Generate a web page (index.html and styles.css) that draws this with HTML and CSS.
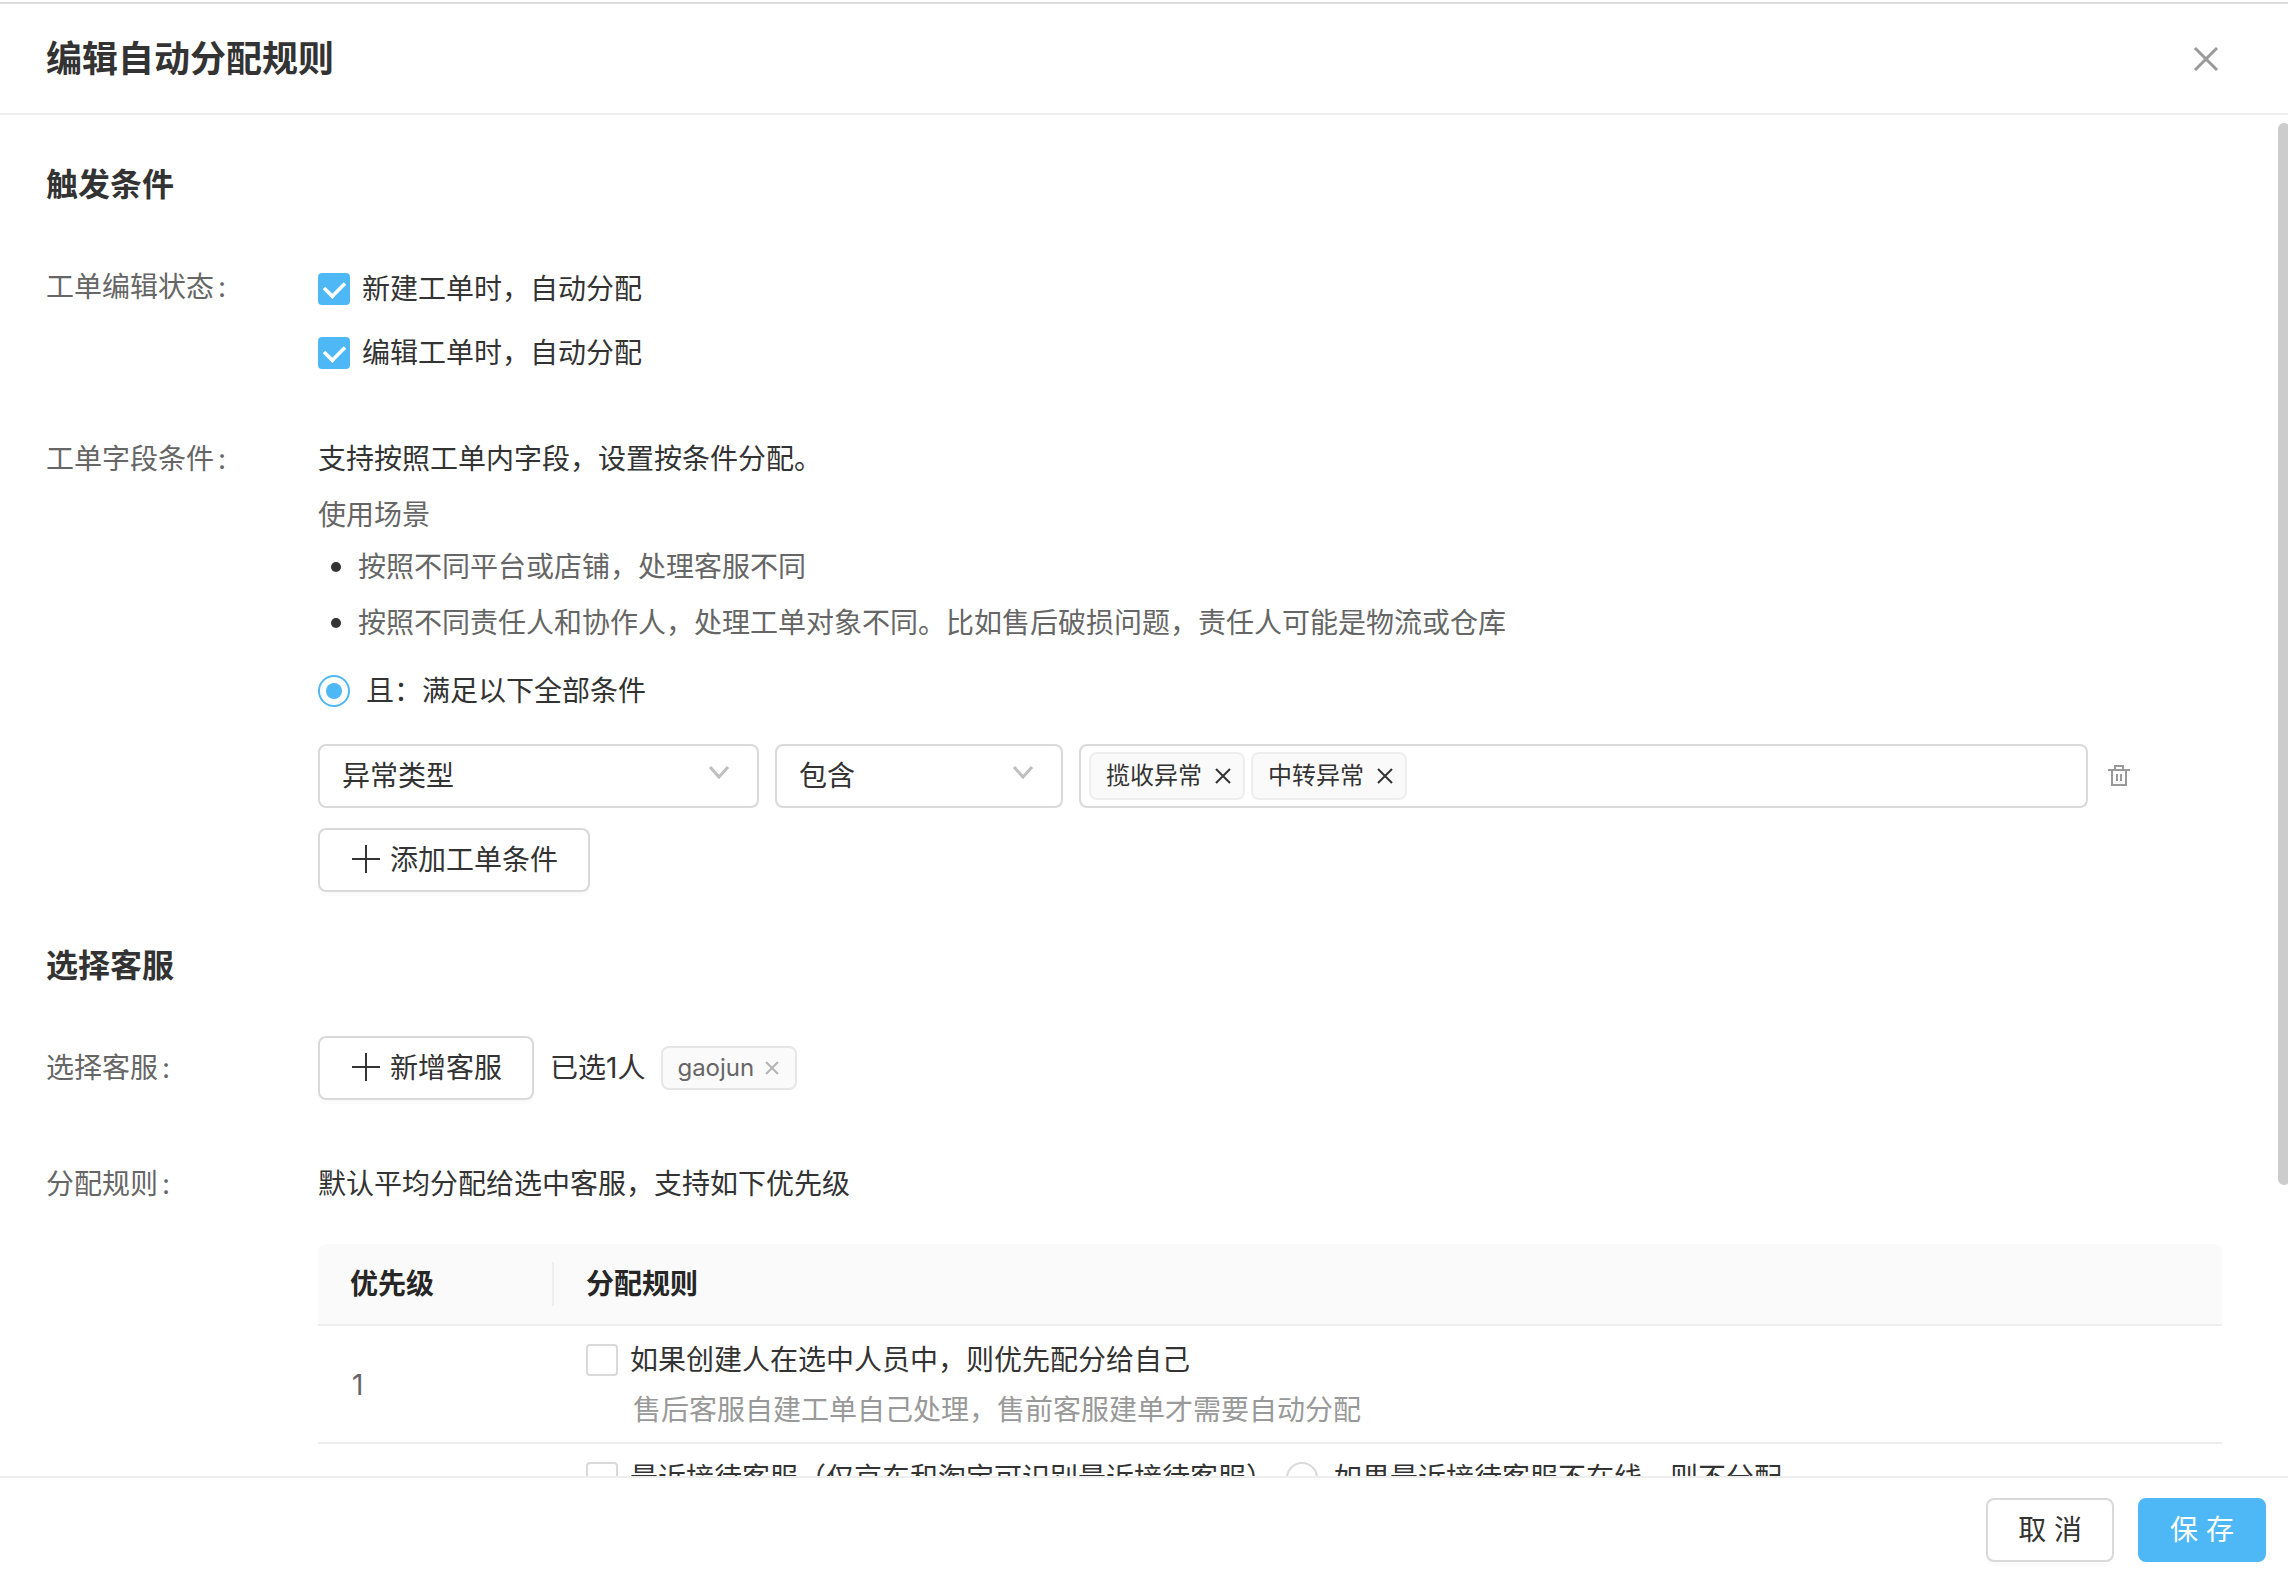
FILE: index.html
```html
<!DOCTYPE html>
<html lang="zh-CN">
<head>
<meta charset="utf-8">
<meta name="viewport" content="width=device-width, initial-scale=1">
<title>编辑自动分配规则</title>
<link rel="stylesheet" href="styles.css">
</head>
<body>
<form class="drawer">
  <header class="drawer-header">
    <h1 class="drawer-title">编辑自动分配规则</h1>
    <button type="button" class="icon-button" aria-label="关闭">
      <svg class="icon-close" viewBox="0 0 26 26" width="26" height="26"><path d="M2 2L24 24M24 2L2 24"/></svg>
    </button>
  </header>

  <main class="drawer-body">
    <section class="section">
      <h2 class="section-title">触发条件</h2>
      <div class="form-row">
        <div class="form-label form-label-offset">工单编辑状态<span class="colon">:</span></div>
        <div class="form-content check-list">
          <label class="choice"><input type="checkbox" class="checkbox" checked>新建工单时，自动分配</label>
          <label class="choice"><input type="checkbox" class="checkbox" checked>编辑工单时，自动分配</label>
        </div>
      </div>
      <div class="form-row">
        <div class="form-label">工单字段条件<span class="colon">:</span></div>
        <div class="form-content">
          <p class="text">支持按照工单内字段，设置按条件分配。</p>
          <p class="text hint">使用场景</p>
          <ul class="scenes">
            <li class="scene">按照不同平台或店铺，处理客服不同</li>
            <li class="scene">按照不同责任人和协作人，处理工单对象不同。比如售后破损问题，责任人可能是物流或仓库</li>
          </ul>
          <label class="choice choice-radio match-all"><input type="radio" name="match" class="radio" checked>且：满足以下全部条件</label>
          <div class="condition">
            <div class="select-wrap select-field">
              <select class="select" aria-label="字段"><option>异常类型</option></select>
              <svg class="chevron" viewBox="0 0 22 14" width="22" height="14"><path d="M2 2L11 12L20 2"/></svg>
            </div>
            <div class="select-wrap select-operator">
              <select class="select" aria-label="条件"><option>包含</option></select>
              <svg class="chevron" viewBox="0 0 22 14" width="22" height="14"><path d="M2 2L11 12L20 2"/></svg>
            </div>
            <div class="tag-box">
              <span class="tag">揽收异常<button type="button" class="icon-button" aria-label="移除揽收异常"><svg class="icon-remove" viewBox="0 0 18 18" width="18" height="18"><path d="M2 2L16 16M16 2L2 16"/></svg></button></span>
              <span class="tag">中转异常<button type="button" class="icon-button" aria-label="移除中转异常"><svg class="icon-remove" viewBox="0 0 18 18" width="18" height="18"><path d="M2 2L16 16M16 2L2 16"/></svg></button></span>
            </div>
            <button type="button" class="icon-button" aria-label="删除条件">
              <svg class="icon-trash" viewBox="0 0 22 24" width="22" height="24"><path d="M0 6H22M7 6V2H15V6M4 6V21H18V6M9 10V17M13 10V17"/></svg>
            </button>
          </div>
          <button type="button" class="button button-add"><svg class="icon-plus" viewBox="0 0 28 28" width="28" height="28"><path d="M14 0V28M0 14H28"/></svg>添加工单条件</button>
        </div>
      </div>
    </section>

    <section class="section">
      <h2 class="section-title">选择客服</h2>
      <div class="form-row">
        <div class="form-label form-label-tall">选择客服<span class="colon">:</span></div>
        <div class="form-content agents">
          <button type="button" class="button button-add"><svg class="icon-plus" viewBox="0 0 28 28" width="28" height="28"><path d="M14 0V28M0 14H28"/></svg>新增客服</button>
          <span>已选1人</span>
          <span class="agent-tag">gaojun<button type="button" class="icon-button" aria-label="移除gaojun"><svg class="icon-remove-light" viewBox="0 0 14 14" width="14" height="14"><path d="M1 1L13 13M13 1L1 13"/></svg></button></span>
        </div>
      </div>
      <div class="form-row">
        <div class="form-label">分配规则<span class="colon">:</span></div>
        <div class="form-content">
          <p class="text">默认平均分配给选中客服，支持如下优先级</p>
          <table class="rules">
            <thead>
              <tr><th class="col-priority"><div class="th-divided">优先级</div></th><th>分配规则</th></tr>
            </thead>
            <tbody>
              <tr>
                <td class="priority">1</td>
                <td>
                  <label class="choice"><input type="checkbox" class="checkbox">如果创建人在选中人员中，则优先配分给自己</label>
                  <p class="rule-note">售后客服自建工单自己处理，售前客服建单才需要自动分配</p>
                </td>
              </tr>
              <tr>
                <td class="priority"></td>
                <td>
                  <div class="rule-options">
                    <label class="choice"><input type="checkbox" class="checkbox">最近接待客服（仅京东和淘宝可识别最近接待客服）</label>
                    <label class="choice choice-radio"><input type="radio" name="offline" class="radio">如果最近接待客服不在线，则不分配</label>
                  </div>
                </td>
              </tr>
            </tbody>
          </table>
        </div>
      </div>
    </section>
    <div class="scroll-thumb"></div>
  </main>

  <footer class="drawer-footer">
    <button type="button" class="button">取 消</button>
    <button type="submit" class="button button-primary">保 存</button>
  </footer>
</form>
</body>
</html>
```
FILE: styles.css
```css
* {
  box-sizing: border-box;
}

body {
  margin: 0;
  background: #fff;
  color: #333;
  font-family: Inter, "Noto Sans CJK SC", sans-serif;
  font-size: 28px;
  line-height: 44px;
}

h1, h2, p, ul {
  margin: 0;
  padding: 0;
}

button, select, input {
  margin: 0;
  font: inherit;
  color: inherit;
}

svg {
  display: block;
  fill: none;
  stroke: currentColor;
}

.drawer {
  display: flex;
  flex-direction: column;
  height: 100vh;
  padding-top: 2px;
}

.drawer-header {
  display: flex;
  align-items: center;
  justify-content: space-between;
  padding: 29px 69px 28px 46px;
  border-top: 2px solid #dcdcdc;
  border-bottom: 2px solid #eee;
}

.drawer-title {
  font-size: 36px;
  line-height: 52px;
  font-weight: 600;
}

.drawer-body {
  position: relative;
  flex: 1;
  min-height: 0;
  overflow: hidden;
  padding: 46px 66px 0 46px;
}

.drawer-footer {
  display: flex;
  justify-content: flex-end;
  gap: 24px;
  padding: 20px 22px 16px;
  border-top: 2px solid #eee;
}

.scroll-thumb {
  position: absolute;
  top: 8px;
  right: -2px;
  width: 12px;
  height: 78%;
  border-radius: 6px;
  background: #ccc;
}

.section {
  margin-bottom: 50px;
}

.section-title {
  margin-bottom: 46px;
  font-size: 32px;
  line-height: 48px;
  font-weight: 600;
}

.form-row {
  display: grid;
  grid-template-columns: 272px 1fr;
}

.form-row + .form-row {
  margin-top: 62px;
}

.form-label {
  color: #666;
}

.form-label-offset {
  padding-top: 10px;
}

.form-label-tall {
  line-height: 64px;
}

.colon {
  margin-left: 4px;
}

.check-list {
  display: flex;
  flex-direction: column;
  gap: 20px;
  padding-top: 12px;
}

.choice {
  display: flex;
  align-items: center;
  gap: 12px;
}

.choice-radio {
  gap: 16px;
}

.checkbox, .radio {
  display: grid;
  place-items: center;
  flex: none;
  appearance: none;
  width: 32px;
  height: 32px;
  border: 2px solid #d9d9d9;
  border-radius: 4px;
  background: #fff;
}

.checkbox:checked {
  border-color: #4eb8f6;
  background: #4eb8f6;
}

.checkbox:checked::before {
  content: "";
  width: 11px;
  height: 18px;
  margin-bottom: 4px;
  border: solid #fff;
  border-width: 0 4px 4px 0;
  transform: rotate(45deg) scale(0.9);
}

.radio {
  border-radius: 50%;
}

.radio:checked {
  border-color: #4eb8f6;
}

.radio:checked::before {
  content: "";
  width: 16px;
  height: 16px;
  border-radius: 50%;
  background: #4eb8f6;
}

.hint {
  margin-top: 12px;
  color: #666;
}

.scenes {
  display: grid;
  gap: 12px;
  margin-top: 8px;
  list-style: none;
}

.scene {
  display: flex;
  align-items: center;
  gap: 17px;
  padding-left: 13px;
  color: #666;
}

.scene::before {
  content: "";
  width: 10px;
  height: 10px;
  border-radius: 50%;
  background: #333;
}

.match-all {
  margin-top: 24px;
}

.condition {
  display: flex;
  align-items: center;
  gap: 16px;
  margin: 31px 92px 20px 0;
}

.select-wrap {
  display: grid;
  align-items: center;
}

.select-field {
  width: 441px;
}

.select-operator {
  width: 288px;
}

.select {
  grid-area: 1 / 1;
  appearance: none;
  width: 100%;
  height: 64px;
  padding: 0 22px;
  border: 2px solid #d9d9d9;
  border-radius: 8px;
  background: #fff;
}

.chevron {
  grid-area: 1 / 1;
  justify-self: end;
  margin: 0 29px 8px 0;
  color: #bfbfbf;
  stroke-width: 3;
  pointer-events: none;
}

.tag-box {
  display: flex;
  flex: 1;
  align-items: center;
  gap: 6px;
  height: 64px;
  margin-right: 4px;
  padding: 0 8px;
  border: 2px solid #d9d9d9;
  border-radius: 8px;
}

.tag, .agent-tag {
  display: flex;
  align-items: center;
  gap: 12px;
  border: 2px solid #eee;
  border-radius: 8px;
  background: #fafafa;
  font-size: 24px;
}

.tag {
  height: 48px;
  padding: 0 11px 0 15px;
}

.agent-tag {
  height: 44px;
  gap: 11px;
  padding: 0 16px 0 14px;
  border-color: #e6e6e6;
  color: #666;
}

.icon-button {
  padding: 0;
  border: 0;
  background: none;
}

.icon-close {
  color: #999;
  stroke-width: 3;
}

.icon-remove {
  stroke-width: 2;
}

.icon-remove-light {
  color: #b3b3b3;
  stroke-width: 2;
}

.icon-trash {
  color: #999;
  stroke-width: 2;
}

.icon-plus {
  margin-bottom: 2px;
  stroke-width: 2;
}

.button {
  height: 64px;
  padding: 0 30px;
  border: 2px solid #d9d9d9;
  border-radius: 8px;
  background: #fff;
  box-shadow: 0 4px 0 rgba(0, 0, 0, 0.016);
}

.button-primary {
  border-color: #4eb8f6;
  background: #4eb8f6;
  color: #fff;
  box-shadow: none;
}

.button-add {
  display: flex;
  align-items: center;
  gap: 10px;
  padding: 0 30px 0 32px;
}

.agents {
  display: flex;
  align-items: center;
  gap: 16px;
}

.rules {
  width: 100%;
  margin-top: 38px;
  border-spacing: 0;
}

.rules th {
  height: 82px;
  padding: 0 0 0 32px;
  border-bottom: 2px solid #eee;
  background: #fafafa;
  color: #262626;
  font-weight: 600;
  text-align: left;
}

.rules th:first-child {
  border-top-left-radius: 8px;
}

.rules th:last-child {
  border-top-right-radius: 8px;
}

.rules td {
  padding: 12px 0 10px 32px;
  border-bottom: 2px solid #eee;
}

.col-priority {
  width: 236px;
}

.th-divided {
  border-right: 2px solid #eee;
}

.rules .priority {
  padding-left: 34px;
  color: #666;
}

.rule-note {
  margin-top: 6px;
  padding-left: 47px;
  color: #999;
}

.rule-options {
  display: flex;
  gap: 12px;
}
```
